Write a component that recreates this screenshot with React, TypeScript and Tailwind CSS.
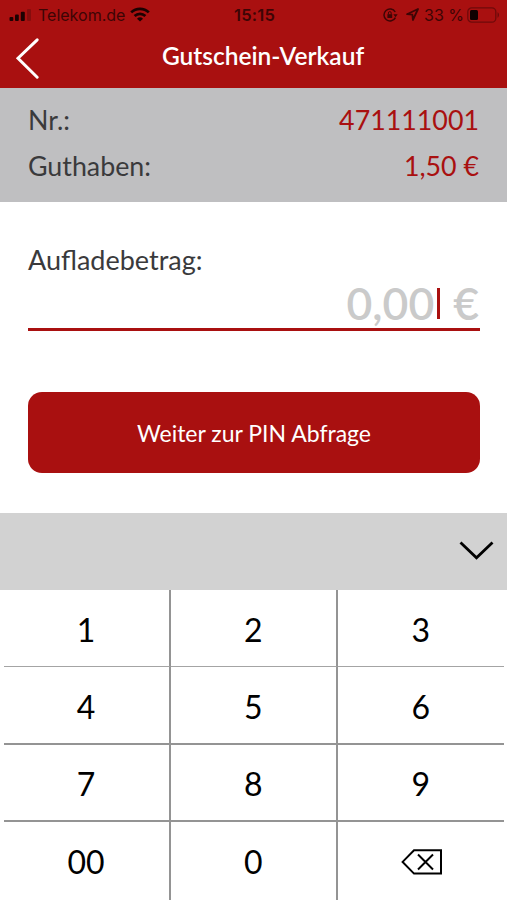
const StatusBar = () => {
    return (
        <div className="h-[29px] shrink-0 flex items-center font-[Inter,sans-serif] text-[16px] leading-[20px] text-[#3d0505]">
            <div className="flex-1 flex items-center pl-[9px]">
                <svg className="w-[24px] h-[12px]" viewBox="0 0 24 12" fill="#1c0202">
                    <rect x="0.5" y="8" width="3.8" height="4" rx="1" />
                    <rect x="6" y="5.5" width="3.8" height="6.5" rx="1" />
                    <rect x="11.8" y="2.8" width="4" height="9.2" rx="1" />
                    <rect x="18" y="0" width="4" height="12" rx="1" opacity="0.25" />
                </svg>
                <span className="ml-[5px] w-[87px] whitespace-nowrap">Telekom.de</span>
                <svg className="ml-[5px] w-[20px] h-[15px]" viewBox="0 0 20 15" fill="none" stroke="#1c0202" strokeWidth="2.7">
                    <path d="M1.2 5.4a12.6 12.6 0 0 1 17.6 0" />
                    <path d="M4.6 9a7.8 7.8 0 0 1 10.8 0" />
                    <path d="M10 14.6L7 11.7a4.4 4.4 0 0 1 6 0z" fill="#1c0202" stroke="none" />
                </svg>
            </div>
            <span className="font-[600] text-[16.5px] tracking-[0.2px]">15:15</span>
            <div className="flex-1 flex items-center justify-end pr-[7px]">
                <svg className="w-[15px] h-[14px]" viewBox="0 0 15 14" fill="none" stroke="#3d0505" strokeWidth="1.5">
                    <path d="M12.2 4A6 6 0 1 0 12.4 9.6" />
                    <path d="M10.3 6.2h4.4l-2.2 3z" fill="#3d0505" stroke="none" />
                    <rect x="4.4" y="6.2" width="4.8" height="3.8" fill="#3d0505" stroke="none" />
                    <path d="M5.4 6.4V5a1.4 1.4 0 0 1 2.8 0v1.4" strokeWidth="1" />
                </svg>
                <svg className="ml-[8px] w-[13px] h-[13px]" viewBox="0 0 13 13" fill="none" stroke="#3d0505" strokeWidth="1.8" strokeLinejoin="round">
                    <path d="M12 1L1 6.2l5.4.5.5 5.3z" />
                </svg>
                <span className="ml-[5px] w-[39px] whitespace-nowrap">33 %</span>
                <svg className="ml-[4px] w-[33px] h-[16px]" viewBox="0 0 33 16" fill="none">
                    <rect x="0.8" y="0.8" width="28" height="14.4" rx="4" stroke="#6f0a0a" strokeWidth="1.3" />
                    <rect x="3" y="3" width="8" height="10" rx="1.5" fill="#100101" />
                    <path d="M30.5 5.3c2 .8 2 4.6 0 5.4z" fill="#6f0a0a" />
                </svg>
            </div>
        </div>
    )
}

const Header = () => {
    return (
        <div className="h-[59px] shrink-0 grid grid-cols-[60px_1fr_41px] items-start">
            <svg className="ml-[15px] mt-[8px] w-[25px] h-[43px]" viewBox="0 0 25 43" fill="none" stroke="#fff" strokeWidth="3" strokeLinecap="round">
                <path d="M22.2 2.8L3 21.2l19.2 19" />
            </svg>
            <h1 className="mt-[11px] text-center font-[600] text-[24.5px] leading-[32px] text-white">Gutschein-Verkauf</h1>
        </div>
    )
}

const InfoRow = ({ label, value }: { label: string; value: string }) => {
    return (
        <div className="flex justify-between h-[46px] text-[26.8px] leading-[46px]">
            <span className="text-[#3a3a3c]">{label}</span>
            <span className="text-[#a91010]">{value}</span>
        </div>
    )
}

const BackspaceIcon = () => {
    return (
        <svg className="ml-[2px] w-[42px] h-[26px]" viewBox="0 0 42 26" fill="none" stroke="#000" strokeWidth="2">
            <path d="M13 1.2h27v23.4H13L1.6 12.9z" />
            <path d="M17 5.5l15 15M32 5.5l-15 15" />
        </svg>
    )
}

const keys = ["1", "2", "3", "4", "5", "6", "7", "8", "9", "00", "0", "back"];

const Keypad = () => {
    return (
        <div className="flex-1 mx-[3.5px] grid grid-cols-[167px_167.5px_1fr] grid-rows-[77px_78px_77px_1fr]">
            {keys.map((key, i) => (
                <button
                    key={key}
                    className={`flex items-center justify-center text-[32px] leading-[40px] text-black ${i % 3 < 2 ? "border-r-2" : ""} ${i < 3 ? "pt-[3px] border-b border-r-[#949494] border-b-[#a4a4a4]" : i < 9 ? "pt-[3px] border-b-2 border-[#949494]" : "pt-px border-[#949494]"}`}
                >
                    {key === "back" ? <BackspaceIcon /> : key}
                </button>
            ))}
        </div>
    )
}

const App = () => {
    return (
        <div className="w-[507px] h-[900px] flex flex-col overflow-hidden bg-white font-[Lato,sans-serif]">
            <div className="bg-[#a91010]">
                <StatusBar />
                <Header />
            </div>
            <div className="h-[114px] shrink-0 bg-[#bfbfc1] px-[28px] pt-[9px]">
                <InfoRow label="Nr.:" value="471111001" />
                <InfoRow label="Guthaben:" value="1,50 €" />
            </div>
            <div className="h-[311px] shrink-0 pl-[28px] pr-[27px] pt-[40px]">
                <p className="text-[27px] leading-[36px] text-[#3a3a3c]">Aufladebetrag:</p>
                <div className="h-[53px] pr-px flex justify-end items-center border-b-[3px] border-[#a91010] font-[600] text-[44.5px] text-[#cacaca]">
                    <span>0,00</span>
                    <span className="ml-[3px] mr-[13px] w-[3px] h-[31px] bg-[#a91010]" />
                    <span>€</span>
                </div>
                <button className="mt-[61px] w-full h-[81px] pt-px rounded-[14px] bg-[#a91010] text-white text-[23px]">Weiter zur PIN Abfrage</button>
            </div>
            <div className="h-[77px] shrink-0 flex justify-end bg-[#d2d2d2] pr-[13px] pt-[28px]">
                <svg className="w-[35px] h-[20px]" viewBox="0 0 35 20" fill="none" stroke="#000" strokeWidth="2.8">
                    <path d="M1.5 1.5l16 15.3 16-15.3" />
                </svg>
            </div>
            <Keypad />
        </div>
    )
}
export default App;
